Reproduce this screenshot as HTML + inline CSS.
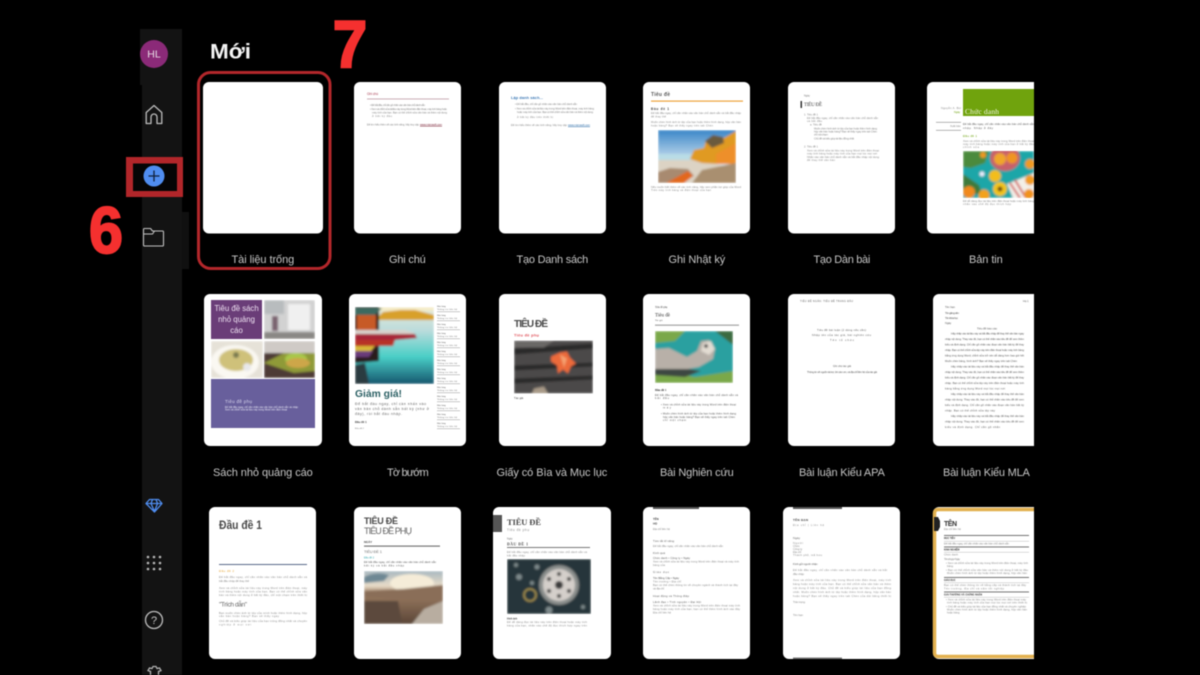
<!DOCTYPE html>
<html lang="vi"><head><meta charset="utf-8"><title>Mới</title>
<style>
html,body{margin:0;padding:0;background:#000;width:1200px;height:675px;overflow:hidden}
svg{display:block}
#root{filter:blur(.4px)}
text{font-family:"Liberation Sans","Noto Sans CJK JP",sans-serif}
.lb{font-size:11px;fill:#c6c6c6;text-anchor:middle;letter-spacing:.2px}
.t{font-size:2.7px;fill:#8c8c8c}
.d{font-size:2.7px;fill:#5c5c5c}
.s{font-family:"Liberation Serif",serif}
.card{fill:#fff}
</style></head><body>
<svg id="root" width="1200" height="675" viewBox="0 0 1200 675" xmlns="http://www.w3.org/2000/svg">
<defs>
<filter id="b1" x="-10%" y="-10%" width="120%" height="120%"><feGaussianBlur stdDeviation="1"/></filter>
<filter id="b0" x="-5%" y="-5%" width="110%" height="110%"><feGaussianBlur stdDeviation=".2"/></filter>
<linearGradient id="sky" x1="0" y1="0" x2="0" y2="1"><stop offset="0" stop-color="#3a86c8"/><stop offset=".45" stop-color="#a9cbe6"/><stop offset=".6" stop-color="#d8e6ee"/><stop offset="1" stop-color="#e8e4da"/></linearGradient>
<linearGradient id="lake" x1="0" y1="0" x2="0" y2="1"><stop offset="0" stop-color="#e6ead8"/><stop offset=".3" stop-color="#bcdcdc"/><stop offset=".65" stop-color="#49cec6"/><stop offset="1" stop-color="#16566e"/></linearGradient>
<linearGradient id="canyon" x1="0" y1="0" x2="0" y2="1"><stop offset="0" stop-color="#a8b8c0"/><stop offset=".28" stop-color="#e8dcc8"/><stop offset=".42" stop-color="#9a7a60"/><stop offset="1" stop-color="#5a4638"/></linearGradient>
</defs>

<!-- sidebar -->
<rect x="140" y="29" width="42" height="56" fill="#131313"/>
<rect x="142" y="85" width="40" height="590" fill="#131313"/>
<rect x="182" y="212" width="7" height="57" fill="#101010"/>

<!-- red square behind icon -->
<path fill-rule="evenodd" d="M126 157H183V197H126zM133 163.500V191H177V163.500z" fill="#b2262a"/>
<rect x="133" y="163.500" width="44" height="27.500" fill="#050505"/>

<!-- sidebar icons -->
<circle cx="154" cy="54" r="14" fill="#8b2a78"/>
<text x="154" y="57.500" font-size="10.500" fill="#e8dce6" text-anchor="middle">HL</text>
<path d="M146.200 123.500V112.500L154 105.500l7.800 7v11h-4.800v-6.500a3 3 0 0 0-6 0v6.500z" fill="none" stroke="#bdbdbd" stroke-width="1.300" stroke-linejoin="round"/>
<circle cx="154" cy="176" r="10.500" fill="#4f8df0"/>
<path d="M148.500 176h11M154 170.500v11" stroke="#10203a" stroke-width="1.300" fill="none"/>
<path d="M143.500 229.500a1 1 0 0 1 1-1h6l2 2.500h10a1 1 0 0 1 1 1v13a1 1 0 0 1-1 1h-18a1 1 0 0 1-1-1z M143.500 234h9l2-3" fill="none" stroke="#c2c2c2" stroke-width="1.100" stroke-linejoin="round"/>
<path d="M149.500 499.500h9l3.500 4-7.500 8.500-8.500-8.500zM146 503.500h16M151 503.500l3.500 8 3-8M151 503.500l1.500-4M157.500 503.500l-1.500-4" fill="none" stroke="#4f8df0" stroke-width="1.300" stroke-linejoin="round"/>
<g fill="#b8b8b8"><circle cx="148" cy="557" r="1.300"/><circle cx="154" cy="557" r="1.300"/><circle cx="160" cy="557" r="1.300"/><circle cx="148" cy="563" r="1.300"/><circle cx="154" cy="563" r="1.300"/><circle cx="160" cy="563" r="1.300"/><circle cx="148" cy="569" r="1.300"/><circle cx="154" cy="569" r="1.300"/><circle cx="160" cy="569" r="1.300"/></g>
<circle cx="154" cy="620" r="8.500" fill="none" stroke="#bdbdbd" stroke-width="1.300"/>
<text x="154" y="624" font-size="11" fill="#c4c4c4" text-anchor="middle">?</text>
<path d="M150.500 675v-3.500l-2.500-1 1.500-2.500 2.500 .5 1-2h3l1 2 2.500-.5 1.500 2.500-2.500 1V675" fill="none" stroke="#b4b4b4" stroke-width="1.300"/>

<!-- heading -->
<text x="210" y="58.500" font-size="21.500" font-weight="700" fill="#f4f4f4" textLength="41" lengthAdjust="spacingAndGlyphs">Mới</text>

<!-- cards row 1 -->
<rect class="card" x="203" y="82" width="120" height="151.500" rx="6"/>
<rect class="card" x="354" y="82" width="107" height="151.500" rx="6"/>
<rect class="card" x="499" y="82" width="107" height="151.500" rx="6"/>
<rect class="card" x="643" y="82" width="107" height="151.500" rx="6"/>
<rect class="card" x="788" y="82" width="107" height="151.500" rx="6"/>
<path class="card" d="M933 82H1034V233.500H933a6 6 0 0 1-6-6V88a6 6 0 0 1 6-6z"/>
<!-- cards row 2 -->
<rect class="card" x="204" y="294" width="118" height="152" rx="6"/>
<rect class="card" x="349" y="294" width="117" height="152" rx="6"/>
<rect class="card" x="499" y="294" width="107" height="152" rx="6"/>
<rect class="card" x="643" y="294" width="107" height="152" rx="6"/>
<rect class="card" x="788" y="294" width="107" height="152" rx="6"/>
<path class="card" d="M939 294H1034V446H939a6 6 0 0 1-6-6V300a6 6 0 0 1 6-6z"/>
<!-- cards row 3 -->
<rect class="card" x="209" y="507" width="107" height="152" rx="6"/>
<rect class="card" x="354" y="507" width="107" height="152" rx="6"/>
<rect class="card" x="493" y="507" width="118" height="152" rx="6"/>
<rect class="card" x="643" y="507" width="107" height="152" rx="6"/>
<rect class="card" x="783" y="507" width="117" height="152" rx="6"/>
<path class="card" d="M939 507H1034V659H939a6 6 0 0 1-6-6V513a6 6 0 0 1 6-6z"/>

<g filter="url(#b0)">
<!-- Ghi chu -->
<text x="367" y="95" font-size="3.200" fill="#a5364c">Ghi chú</text>
<rect x="367" y="98.500" width="82" height=".9" fill="#c4a5ad"/>
<text class="t" x="370" y="106" textLength="55">• Để bắt đầu, chỉ cần gõ nhấn vào văn bản chỗ dành sẵn</text>
<text class="t" x="370" y="110" textLength="77">• Xem và chỉnh sửa tài liệu này trong Word trên điện thoại, máy tính bảng hoặc</text>
<text class="t" x="372" y="113.500" textLength="75">máy tính của bạn. Bạn có thể chỉnh sửa văn bản và thêm nội dung</text>
<text class="t" x="372" y="117" textLength="20">ở bất kỳ đâu</text>
<text class="t" x="367" y="125.500" textLength="52">Để tìm hiểu thêm về các tính năng, hãy truy cập</text>
<text class="d" x="420" y="125.500" textLength="22" style="fill:#7a2236">www.microsoft.com</text>
<rect x="420" y="126" width="22" height=".5" fill="#7a2236"/>

<!-- Tao danh sach -->
<text x="511" y="99" font-size="3.900" font-weight="700" fill="#3b78b5" textLength="32">Lập danh sách...</text>
<text class="t" x="515" y="105" textLength="62">• Để bắt đầu, chỉ cần gõ nhấn vào văn bản chỗ dành sẵn</text>
<text class="t" x="515" y="109.500" textLength="79">• Xem và chỉnh sửa tài liệu này trong Word trên điện thoại, máy tính bảng</text>
<text class="t" x="517" y="113" textLength="76">hoặc máy tính của bạn. Bạn có thể chỉnh sửa văn bản và thêm nội dung</text>
<text class="t" x="517" y="118" textLength="36">ở bất kỳ đâu trên thiết bị</text>
<text class="t" x="511" y="126" textLength="56">Để tìm hiểu thêm về các tính năng, hãy truy cập</text>
<text class="d" x="568" y="126" textLength="22" style="fill:#2d6da8">www.microsoft.com</text>
<rect x="568" y="126.500" width="22" height=".5" fill="#2d6da8"/>

<!-- Ghi nhat ky -->
<text x="651" y="96" font-size="5" font-weight="700" fill="#555" textLength="19">Tiêu đề</text>
<rect x="651" y="100.500" width="92" height="1.200" fill="#eda33a"/>
<text x="651" y="110" font-size="3.200" font-weight="700" fill="#444" textLength="18">Đầu đề 1</text>
<text class="t" x="651" y="114" textLength="90">Để bắt đầu ngay, chỉ cần nhấn vào văn bản chỗ dành sẵn và bắt đầu nhập</text>
<text class="t" x="651" y="117.500" textLength="15">để thay thế</text>
<text class="t" x="651" y="123" textLength="90">Muốn chèn hình ảnh từ tệp của bạn hoặc thêm hình dạng, hộp văn bản</text>
<text class="t" x="651" y="126.500" textLength="62">hoặc bảng? Bạn sẽ thấy ngay trên tab Chèn</text>
<svg x="658" y="130" width="78" height="53" viewBox="0 0 78 53">
<g filter="url(#b1)">
<rect width="78" height="53" fill="url(#sky)"/>
<path d="M0 24H36V31H0z" fill="#b9dce6"/>
<path d="M0 30H36L78 38V53H0z" fill="#dcd3c4"/>
<path d="M32 29L36 20 46 18 48 10 56 7 66 8 78 1V33L60 34 44 33z" fill="#e09a22"/>
<path d="M47 11l8-6 10 2 1 6-12 5z" fill="#6a5a3e"/>
<path d="M58 24L78 13V34H58z" fill="#ee8f2a"/>
<path d="M0 53V42L12 38 30 39 36 46 22 53z" fill="#a88a70"/>
<path d="M8 53L30 41 35 46 26 53z" fill="#e2681d"/>
<path d="M34 53L44 40 78 33V53z" fill="#a98f70"/>
</g></svg>
<text class="t" x="651" y="188" textLength="90">Nếu muốn biết thêm về các tính năng, hãy xem phần trợ giúp của Word</text>
<text class="t" x="651" y="191" textLength="60">Trên máy tính bảng và điện thoại của bạn</text>

<!-- Tao dan bai -->
<text x="804" y="96.500" font-size="2.500" fill="#777">Ngày</text>
<rect x="800.500" y="101" width="1.500" height="7" fill="#333"/>
<text class="s" x="804" y="106" font-size="5" fill="#444" textLength="18">TIÊU ĐỀ</text>
<text class="t" x="804" y="115.500">1.  Tiêu đề 1</text>
<text class="t" x="807" y="119" textLength="71">Để bắt đầu ngay, chỉ cần nhấn vào văn bản chỗ dành sẵn</text>
<text class="t" x="807" y="122" textLength="15">và bắt đầu</text>
<text class="t" x="810" y="125.500">a.  Tiêu đề</text>
<text class="t" x="814" y="129.500" textLength="63">Muốn chèn hình ảnh từ tệp của bạn hoặc thêm hình dạng</text>
<text class="t" x="814" y="132.500" textLength="63">hộp văn bản hoặc bảng? Bạn sẽ thấy ngay trên tab Chèn</text>
<text class="t" x="814" y="135.500" textLength="14">chỉ một chạm</text>
<text class="t" x="814" y="139.500" textLength="40">Chủ đề và kiểu giúp tài liệu đồng nhất</text>
<text class="t" x="804" y="147.500">2.  Tiêu đề 1</text>
<text class="t" x="807" y="151.500" textLength="72">Xem và chỉnh sửa tài liệu này trong Word trên điện thoại</text>
<text class="t" x="807" y="154.500" textLength="70">máy tính bảng hoặc máy tính của bạn mọi lúc mọi nơi</text>
<text class="t" x="807" y="158" textLength="72">Nhấn vào văn bản chỗ dành sẵn và bắt đầu nhập nội dung</text>
<text class="t" x="807" y="161" textLength="28">để thay thế văn bản</text>

<!-- Ban tin -->
<text class="t" x="941" y="109" textLength="20">Nguyễn A. Bùi</text>
<text x="954" y="113" font-size="2.600" fill="#6ea10f">Ngày</text>
<rect x="936" y="122" width="25" height=".6" fill="#888"/>
<text class="t" x="950" y="127">Xuất bản</text>
<rect x="936" y="130" width="25" height=".6" fill="#888"/>
<rect x="963" y="89" width="71" height="27" fill="#6fa30f"/>
<text class="s" x="965" y="114" font-size="7.500" fill="#f5f8e8" textLength="34">Chức danh</text>
<text class="d" x="963" y="125" textLength="71">Để bắt đầu ngay, chỉ cần nhấn vào văn bản chỗ dành sẵn</text>
<text class="d" x="963" y="129" textLength="30">nhập. Nhập ở đây</text>
<text x="963" y="137" font-size="3" fill="#6fa30f" textLength="14">Đầu đề 1</text>
<text class="t" x="963" y="142" textLength="71">Xem và chỉnh sửa tài liệu này trong Word trên điện thoại</text>
<text class="t" x="963" y="145" textLength="71">máy tính bảng hoặc máy tính của bạn ở bất kỳ đâu</text>
<text class="t" x="963" y="148" textLength="16">chỉnh sửa</text>
<svg x="963" y="151" width="71" height="47" viewBox="0 0 71 47">
<g filter="url(#b1)">
<rect width="71" height="47" fill="#1ea6a8"/>
<path d="M0 0H26L22 12 8 17 0 16z" fill="#4c8a3e"/>
<path d="M0 23L16 34 19 43H0z" fill="#3d7a3a"/>
<ellipse cx="42" cy="7" rx="15" ry="13" fill="#c8606a"/>
<circle cx="37" cy="8" r="6" fill="#f0a52a"/><circle cx="49" cy="7" r="5.500" fill="#f09520"/>
<circle cx="20" cy="4" r="3" fill="#f09a20"/>
<circle cx="32" cy="25" r="6" fill="#f3bd1e"/>
<circle cx="37" cy="38" r="7" fill="#f3c41e"/><circle cx="37" cy="38" r="2.500" fill="#6a4a18"/>
<circle cx="6" cy="41" r="6" fill="#f0891a"/>
<circle cx="21" cy="44" r="5.500" fill="#f3a21e"/>
<path d="M44 33L71 22V47H50z" fill="#f3efe8"/>
<path d="M47 32L57 47M52 29L63 47" stroke="#d04848" stroke-width="1.800"/>
<circle cx="67" cy="13" r="5" fill="#f09a20"/>
<circle cx="67" cy="29" r="5" fill="#f09a20"/>
<circle cx="66" cy="43" r="5" fill="#f0921e"/>
<circle cx="19" cy="23" r="2.500" fill="#eef"/>
</g></svg>
<text class="t" x="963" y="202" textLength="71">Để dễ dàng đọc tài liệu trên điện thoại hoặc máy tính bảng</text>
<text class="t" x="963" y="205" textLength="48">nhấn vào chế độ đọc thích hợp</text>

<!-- Sach nho -->
<rect x="211" y="300" width="51" height="39" fill="#6b3c78"/>
<text x="236.500" y="311" font-size="7.800" fill="#ecdff0" text-anchor="middle">Tiêu đề sách</text>
<text x="236.500" y="322" font-size="7.800" fill="#ecdff0" text-anchor="middle">nhỏ quảng</text>
<text x="236.500" y="333" font-size="7.800" fill="#ecdff0" text-anchor="middle">cáo</text>
<svg x="264" y="300" width="51" height="39" viewBox="0 0 51 39"><g filter="url(#b1)">
<rect width="51" height="39" fill="#d2d2d2"/>
<rect x="0" y="0" width="20" height="14" fill="#b8bcbe"/>
<rect x="24" y="4" width="22" height="26" fill="#f0f0f0"/>
<rect x="8" y="16" width="6" height="15" fill="#7a6270"/>
<rect y="32" width="51" height="7" fill="#8a8885"/>
</g></svg>
<svg x="211" y="341" width="52" height="37" viewBox="0 0 52 37"><g filter="url(#b1)">
<rect width="52" height="37" fill="#e6e2d8"/>
<ellipse cx="24" cy="21" rx="24" ry="17" fill="#faf8f2"/>
<ellipse cx="25" cy="19" rx="17" ry="11" fill="#cfc17a"/>
<circle cx="36" cy="26" r="4" fill="#e8e8ea"/><circle cx="25" cy="14" r="3" fill="#7a7a50"/>
</g></svg>
<svg x="264" y="341" width="51" height="37" viewBox="0 0 51 37"><g filter="url(#b1)">
<rect width="51" height="37" fill="#4e3a35"/>
<rect width="51" height="12" fill="#cfcac6"/>
<path d="M0 22L20 12H51V30L30 32z" fill="#8f9a38"/>
<ellipse cx="32" cy="18" rx="11" ry="6" fill="#a8c848"/>
<ellipse cx="34" cy="22" rx="12" ry="5" fill="#cda648"/>
</g></svg>
<rect x="211" y="379" width="104" height="49" fill="#675e9c"/>
<text x="225" y="403" font-size="4.500" fill="#dcdaf0" textLength="27">Tiêu đề phụ</text>
<text x="225" y="408" font-size="2.400" fill="#eeeef8" textLength="73">Để bắt đầu ngay, chỉ cần nhấn vào văn bản chỗ dành sẵn và nhập</text>
<text x="225" y="410.500" font-size="2.400" fill="#eeeef8" textLength="62">Xem và chỉnh sửa tài liệu này trong Word trên điện thoại</text>

<!-- To buom -->
<svg x="355" y="307" width="79" height="77" viewBox="0 0 79 77"><g filter="url(#b1)">
<rect width="79" height="77" fill="url(#lake)"/>
<rect x="20" width="59" height="4" fill="#f4ecc8"/>
<path d="M20 13L28 5 46 3 60 3 79 8V13z" fill="#d8a02a"/>
<path d="M0 0H24V54L0 56z" fill="#2a1e1a"/>
<path d="M0 1H27L20 8H0z" fill="#3e6a60"/>
<rect x="2" y="8" width="19" height="15" fill="#c75a28"/>
<path d="M0 23H50L60 26 56 28 0 28z" fill="#d8d2cc"/>
<path d="M0 27H60L62 31 40 33 0 33z" fill="#a82838"/>
<path d="M0 33H40L38 39 0 39z" fill="#b83028"/>
<path d="M0 39H20L16 44 0 44z" fill="#d8b838"/>
<path d="M0 44H18L14 50 0 50z" fill="#6a3a7a"/>
<path d="M0 58L10 56 14 77H0z" fill="#2a3a40"/>
</g></svg>
<text x="355" y="397" font-size="10" font-weight="700" fill="#2f6266" textLength="47" lengthAdjust="spacingAndGlyphs">Giảm giá!</text>
<text x="355" y="405" font-size="3.600" fill="#666" textLength="71">Để bắt đầu ngay, chỉ cần nhấn vào</text>
<text x="355" y="410" font-size="3.600" fill="#666" textLength="74">văn bản chỗ dành sẵn bất kỳ (như ở</text>
<text x="355" y="415" font-size="3.600" fill="#666" textLength="47">đây), rồi bắt đầu nhập.</text>
<text x="355" y="423" font-size="2.800" font-weight="700" fill="#444">Đầu đề 1</text>
<text x="355" y="429" font-size="2.200" fill="#777">Đầu đề 2</text>
<g>
<text x="437" y="307" font-size="2" fill="#555">Nhà hàng</text><text x="437" y="310" font-size="2" fill="#555" textLength="20">Thông tin liên hệ</text><rect x="437" y="311.500" width="23" height=".5" fill="#999"/>
<text x="437" y="316" font-size="2" fill="#555">Nhà hàng</text><text x="437" y="319" font-size="2" fill="#555" textLength="20">Thông tin liên hệ</text><rect x="437" y="320.500" width="23" height=".5" fill="#999"/>
<text x="437" y="325" font-size="2" fill="#555">Nhà hàng</text><text x="437" y="328" font-size="2" fill="#555" textLength="20">Thông tin liên hệ</text><rect x="437" y="329.500" width="23" height=".5" fill="#999"/>
<text x="437" y="334" font-size="2" fill="#555">Nhà hàng</text><text x="437" y="337" font-size="2" fill="#555" textLength="20">Thông tin liên hệ</text><rect x="437" y="338.500" width="23" height=".5" fill="#999"/>
<text x="437" y="343" font-size="2" fill="#555">Nhà hàng</text><text x="437" y="346" font-size="2" fill="#555" textLength="20">Thông tin liên hệ</text><rect x="437" y="347.500" width="23" height=".5" fill="#999"/>
<text x="437" y="352" font-size="2" fill="#555">Nhà hàng</text><text x="437" y="355" font-size="2" fill="#555" textLength="20">Thông tin liên hệ</text><rect x="437" y="356.500" width="23" height=".5" fill="#999"/>
<text x="437" y="361" font-size="2" fill="#555">Nhà hàng</text><text x="437" y="364" font-size="2" fill="#555" textLength="20">Thông tin liên hệ</text><rect x="437" y="365.500" width="23" height=".5" fill="#999"/>
<text x="437" y="370" font-size="2" fill="#555">Nhà hàng</text><text x="437" y="373" font-size="2" fill="#555" textLength="20">Thông tin liên hệ</text><rect x="437" y="374.500" width="23" height=".5" fill="#999"/>
<text x="437" y="379" font-size="2" fill="#555">Nhà hàng</text><text x="437" y="382" font-size="2" fill="#555" textLength="20">Thông tin liên hệ</text><rect x="437" y="383.500" width="23" height=".5" fill="#999"/>
<text x="437" y="388" font-size="2" fill="#555">Nhà hàng</text><text x="437" y="391" font-size="2" fill="#555" textLength="20">Thông tin liên hệ</text><rect x="437" y="392.500" width="23" height=".5" fill="#999"/>
<text x="437" y="397" font-size="2" fill="#555">Nhà hàng</text><text x="437" y="400" font-size="2" fill="#555" textLength="20">Thông tin liên hệ</text><rect x="437" y="401.500" width="23" height=".5" fill="#999"/>
<text x="437" y="406" font-size="2" fill="#555">Nhà hàng</text><text x="437" y="409" font-size="2" fill="#555" textLength="20">Thông tin liên hệ</text><rect x="437" y="410.500" width="23" height=".5" fill="#999"/>
<text x="437" y="415" font-size="2" fill="#555">Nhà hàng</text><text x="437" y="418" font-size="2" fill="#555" textLength="20">Thông tin liên hệ</text><rect x="437" y="419.500" width="23" height=".5" fill="#999"/>
<text x="437" y="424" font-size="2" fill="#555">Nhà hàng</text><text x="437" y="427" font-size="2" fill="#555" textLength="20">Thông tin liên hệ</text><rect x="437" y="428.500" width="23" height=".5" fill="#999"/>
</g>

<!-- Giay co bia -->
<text x="514" y="327" font-size="10" font-weight="700" fill="#484848" textLength="34">TIÊU ĐỀ</text>
<text x="514" y="336.500" font-size="4" font-weight="700" fill="#e0525a" textLength="25">Tiêu đề phụ</text>
<svg x="514" y="340.500" width="79" height="53" viewBox="0 0 79 53"><g filter="url(#b1)">
<rect width="79" height="53" fill="#4c4a48"/>
<path d="M0 8L79 3V8L0 14zM0 25L79 22V26L0 30zM0 38L79 35V39L0 43z" fill="#2c2a2a"/>
<path d="M0 0H40L30 7 0 7z" fill="#6a6866"/>
<path d="M20 48L30 46 34 53H18z" fill="#a89a88"/>
<path d="M37 16L46 12 53 11 56 17 62 23 57 26 54 33 49 29 44 33 43 25 37 21z" fill="#ec6a3a"/>
<path d="M46 14L53 18 50 27z" fill="#f4a070"/>
</g></svg>
<text x="514" y="399" font-size="2.800" fill="#444">Tác giả</text>

<!-- Bai nghien cuu -->
<text class="s" x="655" y="308" font-size="2.600" fill="#444">Tiêu đề phụ</text>
<text class="s" x="655" y="316.500" font-size="5" fill="#333" textLength="15">Tiêu đề</text>
<text class="s" x="655" y="321" font-size="2.500" fill="#555">Tác giả</text>
<rect x="655" y="324.500" width="84" height="1.300" fill="#aaa"/>
<svg x="655" y="331" width="78" height="52" viewBox="0 0 78 52"><g filter="url(#b1)">
<rect width="78" height="52" fill="#2aa0a0"/>
<path d="M0 0H30L20 10 0 12zM0 38L40 46 78 40V52H0z" fill="#7aa84a"/>
<path d="M60 0H78V14z" fill="#3a6a40"/>
<path d="M0 18L14 17 32 26 42 20 46 10 54 9 60 18 58 28 44 36 22 40 0 40z" fill="#b8b0a8"/>
<path d="M48 12L56 10 60 18 54 24 46 20z" fill="#e2dcd2"/>
<path d="M0 38H34L46 40 30 46 0 44z" fill="#3d4642"/>
<circle cx="51" cy="15" r="1.800" fill="#222"/>
</g></svg>
<text class="s" x="655" y="391" font-size="3" font-weight="700" fill="#333">Đầu đề 1</text>
<text class="d" x="655" y="396" textLength="83">Để bắt đầu ngay, chỉ cần nhấn vào văn bản chỗ dành sẵn và</text>
<text class="d" x="655" y="399" textLength="14">bắt đầu</text>
<text class="d" x="661" y="405.500" textLength="75">• Xem và chỉnh sửa tài liệu này trong Word trên điện thoại</text>
<text class="d" x="663" y="408.500" textLength="8">máy</text>
<text class="d" x="661" y="414.500" textLength="75">• Muốn chèn hình ảnh từ tệp của bạn hoặc thêm hình dạng</text>
<text class="d" x="663" y="418" textLength="72">hộp văn bản hoặc bảng? Bạn sẽ thấy ngay trên tab Chèn</text>
<text class="d" x="663" y="421" textLength="23">chỉ một chạm</text>

<!-- APA -->
<text class="d" x="800" y="302" textLength="53" style="font-size:2.400px">TIÊU ĐỀ NGẮN: TIÊU ĐỀ TRANG ĐẦU</text>
<text class="d" x="817" y="331" textLength="49">Tiêu đề bài luận (2 dòng nếu cần)</text>
<text class="d" x="812" y="336" textLength="59">Nhập tên của tác giả, bài nghiên cứu</text>
<text class="d" x="830" y="341" textLength="24">Tên tổ chức</text>
<text class="d" x="833" y="367" textLength="18">Ghi chú tác giả</text>
<text class="d" x="807" y="373" textLength="70">Thông tin về nguồn tài trợ, lời cảm ơn, và địa chỉ liên hệ của tác giả</text>

<!-- MLA -->
<text class="d" x="1023" y="302" font-size="2.500">Họ 1</text>
<text class="d" x="945" y="308">Tên bạn</text>
<text class="d" x="945" y="314" textLength="14">Tên giảng viên</text>
<text class="d" x="945" y="319" textLength="13">Tên khóa học</text>
<text class="d" x="945" y="324">Ngày</text>
<text class="d" x="977" y="329.500" textLength="20">Tiêu đề báo cáo</text>
<text class="d" x="951" y="334.500" textLength="73">Hãy nhấp vào tài liệu này và bắt đầu nhập để thay thế văn bản ngay</text>
<text class="d" x="945" y="340" textLength="79">nhập nội dung. Thay vào đó, bạn có thể nhấn vào tiêu đề để xem thêm</text>
<text class="d" x="945" y="345.500" textLength="79">kiểu và định dạng. Chỉ cần gõ nhấn vào đoạn văn bản bất kỳ để thay</text>
<text class="d" x="945" y="351" textLength="79">nhập. Bạn có thể chỉnh sửa tệp này trên điện thoại hoặc máy tính bảng</text>
<text class="d" x="945" y="356.500" textLength="79">bằng ứng dụng Word; chỉnh sửa trở nên dễ dàng hơn bao giờ hết</text>
<text class="d" x="945" y="362" textLength="72">Muốn chèn bảng, hình ảnh? Bạn sẽ thấy ngay trên tab Chèn</text>
<text class="d" x="951" y="367.500" textLength="73">Hãy nhấp vào tài liệu này và bắt đầu nhập để thay thế văn bản</text>
<text class="d" x="945" y="373" textLength="79">nhập nội dung. Thay vào đó, bạn có thể nhấn vào tiêu đề để xem thêm</text>
<text class="d" x="945" y="378.500" textLength="79">kiểu và định dạng. Chỉ cần gõ nhấn vào đoạn văn bản bất kỳ để thay</text>
<text class="d" x="945" y="384" textLength="79">nhập. Bạn có thể chỉnh sửa tệp này trên điện thoại hoặc máy tính</text>
<text class="d" x="945" y="389.500" textLength="60">bảng bằng ứng dụng Word mọi lúc mọi nơi</text>
<text class="d" x="951" y="395" textLength="73">Hãy nhấp vào tài liệu này và bắt đầu nhập để thay thế văn bản</text>
<text class="d" x="945" y="400.500" textLength="79">nhập nội dung. Thay vào đó, bạn có thể nhấn vào tiêu đề để xem</text>
<text class="d" x="945" y="406" textLength="79">kiểu và định dạng. Chỉ cần gõ nhấn vào đoạn văn bản bất kỳ</text>
<text class="d" x="945" y="411.500" textLength="50">nhập. Bạn có thể chỉnh sửa tệp này</text>
<text class="d" x="951" y="417" textLength="73">Hãy nhấp vào tài liệu này và bắt đầu nhập để thay thế văn bản</text>
<text class="d" x="945" y="422.500" textLength="79">nhập nội dung. Thay vào đó, bạn có thể nhấn vào tiêu đề để xem</text>
<text class="d" x="945" y="428" textLength="55">kiểu và định dạng. Chỉ cần gõ nhấn</text>

<!-- Row 3 card 1 -->
<text x="219" y="529" font-size="11.500" font-weight="700" fill="#484848" textLength="43" lengthAdjust="spacingAndGlyphs">Đầu đề 1</text>
<rect x="219" y="564" width="88" height="1" fill="#5a6b8a"/>
<text x="219" y="572" font-size="3" fill="#e6a83c" textLength="15">Đầu đề 2</text>
<text class="t" x="219" y="578" textLength="88">Để bắt đầu ngay, chỉ cần nhấn vào văn bản chỗ dành sẵn và</text>
<text class="t" x="219" y="582" textLength="30">bắt đầu nhập để thay thế</text>
<text class="t" x="219" y="589" textLength="88">Xem và chỉnh sửa tài liệu này trong Word trên điện thoại, máy</text>
<text class="t" x="219" y="592.500" textLength="88">tính bảng hoặc máy tính của bạn. Bạn có thể chỉnh sửa văn</text>
<text class="t" x="219" y="596" textLength="88">bản và thêm nội dung ở bất kỳ đâu, chỉ một chạm trên thiết bị</text>
<text x="219" y="606.500" font-size="6.500" fill="#666" textLength="28">"Trích dẫn"</text>
<text class="t" x="219" y="614" textLength="88">Bạn muốn chèn ảnh từ tệp của mình hoặc thêm hình dạng, hộp</text>
<text class="t" x="219" y="617" textLength="60">văn bản hoặc bảng? Bạn sẽ thấy ngay</text>
<text class="t" x="219" y="622" textLength="88">Chủ đề và kiểu giúp tài liệu của bạn trông đồng nhất và chuyên</text>
<text class="t" x="219" y="625.500" textLength="32">nghiệp ở mọi nơi</text>

<!-- Row 3 card 2 -->
<text x="364" y="524" font-size="9" font-weight="700" fill="#4a4a4a" textLength="34">TIÊU ĐỀ</text>
<text x="364" y="534" font-size="9" fill="#666" textLength="48">TIÊU ĐỀ PHỤ</text>
<text x="364" y="543" font-size="2.800" font-weight="700" fill="#444">NGÀY</text>
<rect x="364" y="545.500" width="76" height="1.200" fill="#777"/>
<text x="364" y="553" font-size="4" fill="#777" textLength="18">TIÊU ĐỀ 1</text>
<text x="364" y="558.500" font-size="2.500" fill="#3aa8b0">Đầu đề 2</text>
<text class="d" x="364" y="563" textLength="72">Để bắt đầu ngay, chỉ cần nhấn vào văn bản chỗ dành sẵn</text>
<text class="d" x="364" y="566.500" textLength="40">bất kỳ và bắt đầu nhập</text>
<svg x="364" y="571" width="79" height="53" viewBox="0 0 79 53"><g filter="url(#b1)">
<rect width="79" height="53" fill="url(#canyon)"/>
<path d="M0 6Q12 0 25 4L20 10 0 12z" fill="#6e8894"/>
<ellipse cx="48" cy="12" rx="22" ry="9" fill="#f5ecd8"/>
<path d="M0 20L40 18 79 14V30L0 26z" fill="#8a6e58"/>
<path d="M48 53L60 38 79 30V53z" fill="#b8ada0"/>
<path d="M0 30L34 30 38 53H0z" fill="#5c4a3c"/>
</g></svg>

<!-- Row 3 card 3 -->
<rect x="493" y="515" width="9" height="17" fill="#555"/>
<text class="s" x="507" y="525" font-size="8.500" font-weight="700" fill="#4a4a4a" textLength="34">TIÊU ĐỀ</text>
<text x="507" y="531" font-size="3.200" fill="#888" textLength="22">Tiêu đề phụ</text>
<text x="507" y="539.500" font-size="2.400" fill="#777">Ngày</text>
<text class="s" x="507" y="545.500" font-size="3.800" font-weight="700" fill="#555" textLength="21">ĐẦU ĐỀ 1</text>
<rect x="507" y="547" width="83" height="1" fill="#777"/>
<text class="t" x="507" y="553" textLength="80">Để bắt đầu ngay, chỉ cần nhấn vào văn bản chỗ dành sẵn và</text>
<text class="t" x="507" y="556.500" textLength="18">bắt đầu nhập</text>
<svg x="507" y="559" width="84" height="55" viewBox="0 0 84 55"><g filter="url(#b1)">
<rect width="84" height="55" fill="#28343a"/>
<circle cx="52" cy="26" r="20" fill="#8a8e8c"/>
<circle cx="52" cy="26" r="16" fill="#d4cfca"/>
<circle cx="52" cy="26" r="4" fill="#3a3a3a"/>
<g fill="#3a3a3a"><circle cx="52" cy="15" r="2"/><circle cx="62" cy="20" r="2"/><circle cx="62" cy="32" r="2"/><circle cx="52" cy="37" r="2"/><circle cx="42" cy="32" r="2"/><circle cx="42" cy="20" r="2"/></g>
<circle cx="23" cy="36" r="6" fill="none" stroke="#b09a50" stroke-width="1.500"/>
<g fill="#7e8a8c"><circle cx="12" cy="18" r="3"/><circle cx="30" cy="8" r="2.500"/><circle cx="9" cy="6" r="2"/><circle cx="76" cy="48" r="2"/><circle cx="42" cy="51" r="3.500"/><circle cx="25" cy="24" r="2"/></g>
</g></svg>
<text x="507" y="619.500" font-size="2.400" font-weight="700" fill="#444">Hình ảnh</text>
<text class="t" x="507" y="623" textLength="80">Để dễ dàng đọc tài liệu này trên điện thoại hoặc máy tính</text>
<text class="t" x="507" y="626.500" textLength="80">bảng của bạn, nhấn vào chế độ đọc thích hợp ngay trên</text>

<!-- Row 3 card 4 -->
<rect x="653" y="507" width="46" height="2" fill="#555"/>
<text x="653" y="520" font-size="2.800" font-weight="700" fill="#444">TÊN</text>
<text x="653" y="524.500" font-size="2.800" font-weight="700" fill="#444">HỌ</text>
<text class="t" x="653" y="530">Địa chỉ liên hệ</text>
<text class="d" x="653" y="542" textLength="21">Tóm tắt kĩ năng</text>
<text class="t" x="653" y="547" textLength="70">Để bắt đầu ngay, chỉ cần nhấn vào văn bản chỗ dành sẵn</text>
<text class="d" x="653" y="554" textLength="12">Kinh quá</text>
<text class="d" x="653" y="559" textLength="37">Chức danh • Công ty • Ngày</text>
<text class="t" x="653" y="562.500" textLength="86">Xem và chỉnh sửa tài liệu này trong Word trên điện thoại và máy tính</text>
<text class="t" x="653" y="566" textLength="12">bảng của</text>
<text class="d" x="653" y="573" textLength="16">Giáo dục</text>
<text class="d" x="653" y="579" textLength="26">Tên Bằng Cấp • Ngày</text>
<text class="t" x="653" y="582.500" textLength="28">Tên trường • Địa chỉ</text>
<text class="t" x="653" y="586" textLength="85">Bạn có thể chèn thông tin về chuyên ngành và thành tích tại đây</text>
<text class="t" x="653" y="589.500" textLength="11">và địa chỉ</text>
<text class="d" x="653" y="597" textLength="36">Hoạt động và Thông điệp</text>
<text class="d" x="653" y="603" textLength="48">Lãnh đạo • Tình nguyện • Đại Hội</text>
<text class="t" x="653" y="606.500" textLength="87">Xem và chỉnh sửa tài liệu này trong Word trên điện thoại máy tính</text>
<text class="t" x="653" y="610" textLength="87">bảng hoặc máy tính của bạn; bạn có thể thêm hình ảnh vào đây</text>
<text class="t" x="653" y="613.500" textLength="18">Địa chỉ liên hệ</text>

<!-- Row 3 card 5 -->
<rect x="793" y="507" width="49" height="2" fill="#555"/>
<rect x="793" y="657.500" width="49" height="1.500" fill="#777"/>
<text x="793" y="521" font-size="3" font-weight="700" fill="#444" textLength="15">TÊN BẠN</text>
<text class="t" x="793" y="526" textLength="31">Địa chỉ | Liên hệ</text>
<text class="d" x="793" y="539" textLength="7">Ngày</text>
<text class="t" x="793" y="544" textLength="10">Người</text>
<text class="t" x="793" y="547">Chức</text>
<text class="t" x="793" y="550">Công ty</text>
<text class="t" x="793" y="553">Địa chỉ</text>
<text class="t" x="793" y="556" textLength="29">Thành phố, mã bưu</text>
<text class="d" x="793" y="565" textLength="25">Kính gửi người nhận:</text>
<text class="t" x="793" y="571" textLength="94">Để bắt đầu ngay, chỉ cần nhấn vào văn bản chỗ dành sẵn và bắt</text>
<text class="t" x="793" y="575" textLength="11">đầu nhập</text>
<text class="t" x="793" y="581" textLength="98">Xem và chỉnh sửa tài liệu này trong Word trên điện thoại, máy tính</text>
<text class="t" x="793" y="585" textLength="98">bảng hoặc máy tính của bạn. Bạn có thể chỉnh sửa văn bản và thêm</text>
<text class="t" x="793" y="589" textLength="98">nội dung ở bất kỳ đâu. Chủ đề và kiểu giúp tài liệu của bạn đồng</text>
<text class="t" x="793" y="593" textLength="98">nhất. Muốn chèn hình ảnh từ tệp hoặc thêm hình dạng, hộp văn bản</text>
<text class="t" x="793" y="597" textLength="98">hoặc bảng? Bạn sẽ thấy ngay trên tab Chèn của dải băng thiết bị</text>
<text class="t" x="793" y="603" textLength="12">Trân trọng</text>
<text class="t" x="793" y="616" textLength="10">Tên bạn</text>

<!-- Row 3 card 6 -->
<path d="M1034 509.500H938a3.500 3.500 0 0 0-3.500 3.500V653a3.500 3.500 0 0 0 3.500 3.500H1034" fill="none" stroke="#e2b14f" stroke-width="3.500"/>
<path d="M934 517h4l2 4v6l-2 4h-4z" fill="#222"/>
<text x="944" y="526" font-size="7" font-weight="700" fill="#333" textLength="13">TÊN</text>
<text class="t" x="944" y="530">Địa chỉ liên hệ</text>
<rect x="944" y="535" width="85" height=".9" fill="#666"/>
<text x="944" y="539" font-size="2.300" font-weight="700" fill="#333">MỤC TIÊU</text>
<rect x="944" y="541" width="85" height=".4" fill="#aaa"/>
<text class="t" x="944" y="544.500" textLength="65">Để bắt đầu ngay, chỉ cần nhấn vào văn bản chỗ dành sẵn</text>
<rect x="944" y="546.500" width="85" height=".9" fill="#666"/>
<text x="944" y="550.500" font-size="2.300" font-weight="700" fill="#333">KINH NGHIỆM</text>
<rect x="944" y="552" width="85" height=".4" fill="#aaa"/>
<text class="t" x="944" y="555.500" textLength="14">Chức danh</text>
<text class="t" x="944" y="560" textLength="16">Tên công ty • Ngày</text>
<text class="t" x="946" y="564" textLength="82">• Xem và chỉnh sửa tài liệu này trong Word trên điện thoại, máy tính</text>
<text class="t" x="947" y="567">bảng</text>
<text class="t" x="946" y="571" textLength="82">• Bạn có thể chỉnh sửa văn bản và thêm nội dung ở bất kỳ đâu</text>
<text class="t" x="947" y="574" textLength="80">Muốn chèn hình ảnh từ tệp hoặc thêm hình dạng, hộp văn bản</text>
<rect x="944" y="577" width="85" height=".9" fill="#666"/>
<text x="944" y="581" font-size="2.300" font-weight="700" fill="#333">GIÁO DỤC</text>
<rect x="944" y="582.500" width="85" height=".4" fill="#aaa"/>
<text class="t" x="944" y="586" textLength="82">Bạn có thể chèn thông tin về bằng cấp và thành tích tại đây</text>
<text class="t" x="944" y="589.500" textLength="60">Tên trường, địa chỉ và năm tốt nghiệp</text>
<rect x="944" y="591.500" width="85" height=".9" fill="#666"/>
<text x="944" y="595.500" font-size="2.300" font-weight="700" fill="#333" textLength="38">GIẢI THƯỞNG VÀ CHỨNG NHẬN</text>
<rect x="944" y="597" width="85" height=".4" fill="#aaa"/>
<text class="t" x="946" y="600.500" textLength="80">• Xem và chỉnh sửa tài liệu này trong Word trên điện thoại máy</text>
<text class="t" x="947" y="603.500" textLength="80">tính bảng hoặc máy tính của bạn mọi lúc mọi nơi trên thiết bị</text>
<text class="t" x="946" y="607.500" textLength="80">• Chủ đề và kiểu giúp tài liệu của bạn đồng nhất và chuyên nghiệp</text>
<text class="t" x="947" y="610.500" textLength="80">Muốn chèn hình ảnh từ tệp hoặc thêm hình dạng, hộp văn bản</text>
<text class="t" x="947" y="613.500">hoặc bảng</text>
</g>

<!-- labels -->
<text class="lb" x="263" y="263" textLength="63">Tài liệu trống</text>
<text class="lb" x="407.500" y="263" textLength="37">Ghi chú</text>
<text class="lb" x="552.500" y="263" textLength="72">Tạo Danh sách</text>
<text class="lb" x="697" y="263" textLength="57">Ghi Nhật ký</text>
<text class="lb" x="842" y="263" textLength="57">Tạo Dàn bài</text>
<text class="lb" x="986" y="263" textLength="34">Bản tin</text>
<text class="lb" x="263" y="476" textLength="100">Sách nhỏ quảng cáo</text>
<text class="lb" x="408" y="476" textLength="42">Tờ bướm</text>
<text class="lb" x="552" y="476" textLength="111">Giấy có Bìa và Mục lục</text>
<text class="lb" x="697" y="476" textLength="74">Bài Nghiên cứu</text>
<text class="lb" x="842" y="476" textLength="86">Bài luận Kiểu APA</text>
<text class="lb" x="986.500" y="476" textLength="87">Bài luận Kiểu MLA</text>

<!-- annotations -->
<rect x="198.500" y="72.500" width="131.500" height="196" rx="12" fill="none" stroke="#b3272b" stroke-width="3"/>
<text x="333" y="67" font-size="66" font-weight="700" fill="#f5302f" stroke="#f5302f" stroke-width="2.500" textLength="34" lengthAdjust="spacingAndGlyphs">7</text>
<text x="89" y="253" font-size="66" font-weight="700" fill="#f5302f" stroke="#f5302f" stroke-width="2" textLength="34" lengthAdjust="spacingAndGlyphs">6</text>
</svg>
</body></html>
